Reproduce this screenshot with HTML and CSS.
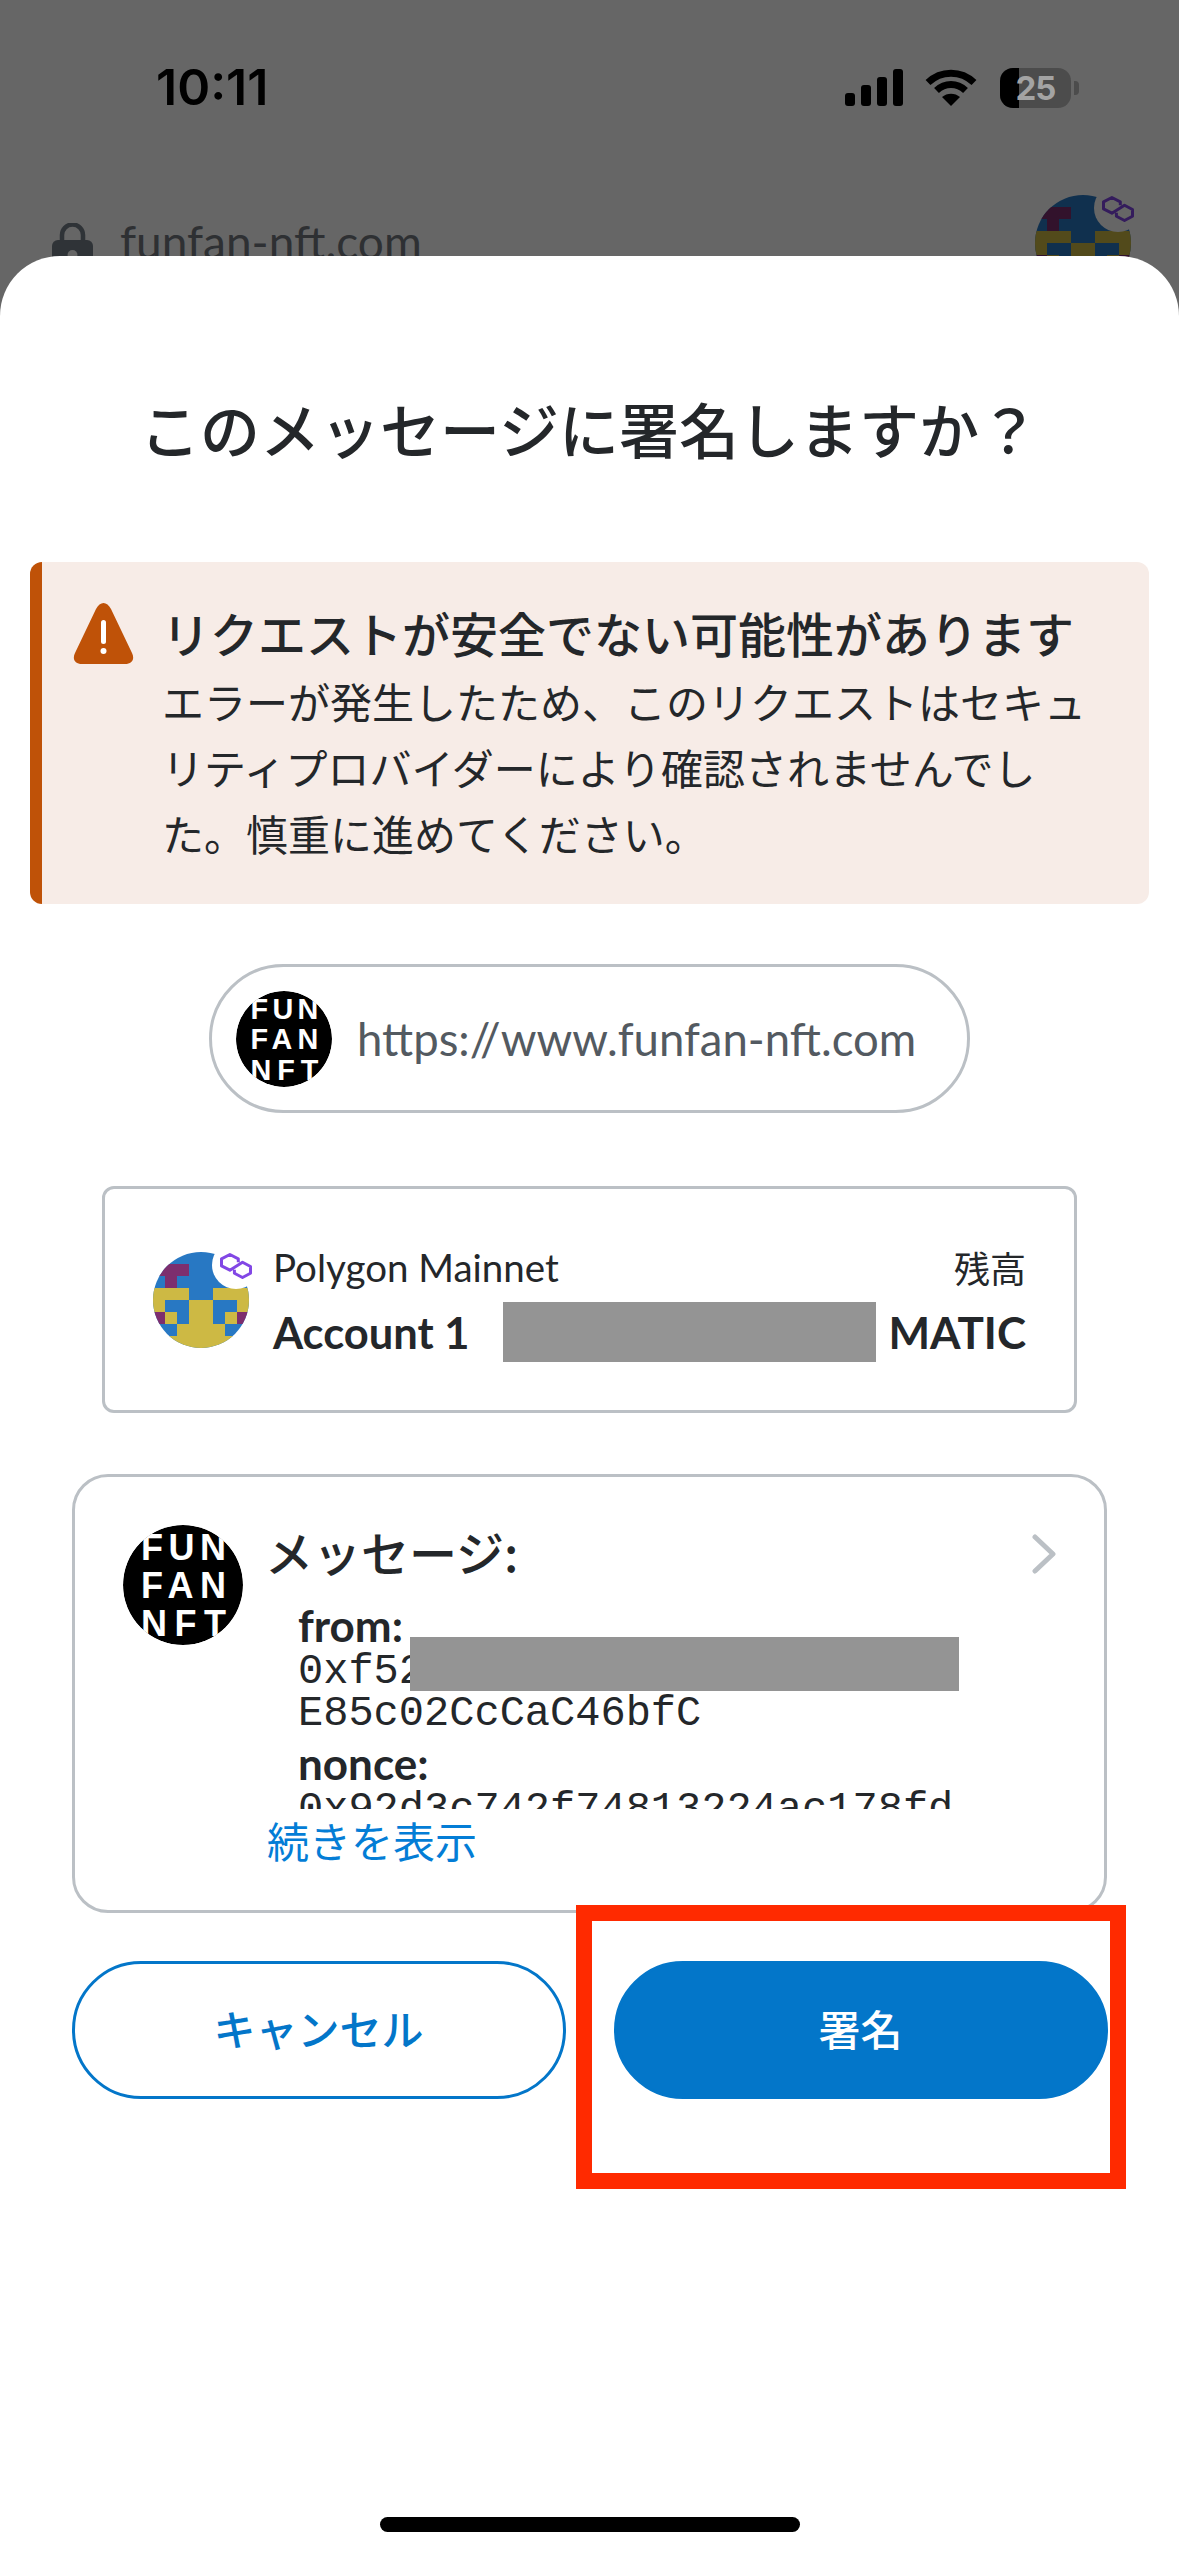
FILE: index.html
```html
<!DOCTYPE html>
<html lang="ja">
<head>
<meta charset="utf-8">
<title>署名</title>
<link rel="stylesheet" href="styles.css">
</head>
<body>
<svg class="defs" width="0" height="0" aria-hidden="true">
  <defs>
    <symbol id="ff-logo" viewBox="0 0 120 120">
      <circle cx="60" cy="60" r="60" fill="#000"/>
      <g class="logo-text">
        <text x="18" y="35" textLength="85" lengthAdjust="spacing">FUN</text>
        <text x="18" y="73" textLength="85" lengthAdjust="spacing">FAN</text>
        <text x="18" y="111" textLength="85" lengthAdjust="spacing">NFT</text>
      </g>
    </symbol>
    <symbol id="blockie" viewBox="0 0 96 96" overflow="visible">
      <clipPath id="round"><circle cx="48" cy="48" r="48"/></clipPath>
      <g clip-path="url(#round)">
        <rect width="96" height="96" fill="#2878c3"/>
        <g fill="#7d2e6e">
          <rect x="0" y="12" width="36" height="12"/>
          <rect x="12" y="24" width="12" height="12"/>
          <rect x="0" y="60" width="12" height="12"/>
          <rect x="84" y="60" width="12" height="12"/>
        </g>
        <g fill="#cdb944">
          <rect x="0" y="36" width="36" height="12"/>
          <rect x="60" y="36" width="36" height="12"/>
          <rect x="0" y="48" width="12" height="12"/>
          <rect x="84" y="48" width="12" height="12"/>
          <rect x="36" y="48" width="24" height="36"/>
          <rect x="12" y="60" width="12" height="12"/>
          <rect x="72" y="60" width="12" height="12"/>
          <rect x="24" y="72" width="48" height="12"/>
          <rect x="0" y="84" width="96" height="12"/>
        </g>
      </g>
      <circle cx="83" cy="13" r="24" fill="#fff"/>
      <path d="M85.300 10.200V6.800L76.900 2.500 68.500 6.800V13.900L76.900 18.200 89.500 10.200 97.500 14.500V21.200L89.500 25.500 81.400 21.200V17.700" fill="none" stroke="#8247e5" stroke-width="3" stroke-linejoin="round"/>
    </symbol>
  </defs>
</svg>

<div class="screen">
  <header class="backdrop">
    <div class="status">
      <span class="time">10:11</span>
      <div class="status-icons">
        <svg class="signal" viewBox="0 0 58 37"><g fill="#000"><rect x="0" y="24" width="10" height="13" rx="3"/><rect x="16" y="16" width="10" height="21" rx="3"/><rect x="32" y="8" width="10" height="29" rx="3"/><rect x="48" y="0" width="10" height="37" rx="3"/></g></svg>
        <svg class="wifi" viewBox="0 0 52 37"><g fill="none" stroke="#000" stroke-width="7"><path d="M3 13.5C16 1 36 1 49 13.5"/><path d="M11.5 21.5C20 13.500 32 13.500 40.500 21.500"/></g><path d="M26 37 17 28c5-4.500 13-4.500 18 0z" fill="#000"/></svg>
        <div class="battery">
          <span class="battery-fill"></span>
          <span class="battery-num">25</span>
          <span class="battery-tip"></span>
        </div>
      </div>
    </div>
    <div class="site">
      <svg class="lock" viewBox="0 0 41 48"><path d="M10 20v-8a10.500 10.500 0 0 1 21 0v8" fill="none" stroke="#2f3337" stroke-width="4.500"/><rect x="0" y="17" width="41" height="31" rx="6" fill="#2f3337"/><circle cx="20.500" cy="32" r="5" fill="#666"/></svg>
      <span class="site-name">funfan-nft.com</span>
      <svg class="site-avatar"><use href="#blockie"/></svg>
    </div>
  </header>

  <main class="sheet">
    <h1 class="title">このメッセージに署名しますか？</h1>

    <section class="alert">
      <svg class="alert-icon" viewBox="0 0 61 61"><path d="M30.500 0c2.700 0 5.500 2 7.500 6l21 44c3 6 0 11-7 11H9c-7 0-10-5-7-11L23 6c2-4 4.800-6 7.500-6z" fill="#bf5208"/><rect x="28" y="17" width="5" height="24" rx="2.500" fill="#fff"/><circle cx="30.500" cy="48" r="3" fill="#fff"/></svg>
      <div class="alert-body">
        <h2 class="alert-title">リクエストが安全でない可能性があります</h2>
        <p class="alert-text">エラーが発生したため、このリクエストはセキュリティプロバイダーにより確認されませんでした。慎重に進めてください。</p>
      </div>
    </section>

    <div class="origin">
      <svg class="origin-logo"><use href="#ff-logo"/></svg>
      <span class="origin-url">https://www.funfan-nft.com</span>
    </div>

    <section class="account">
      <svg class="account-avatar"><use href="#blockie"/></svg>
      <div class="account-main">
        <div class="account-row">
          <span class="network">Polygon Mainnet</span>
          <span class="balance-label">残高</span>
        </div>
        <div class="account-row account-row-second">
          <span class="account-name">Account 1</span>
          <span class="balance"><span class="redact-inline"></span><span class="unit">MATIC</span></span>
        </div>
      </div>
    </section>

    <section class="message">
      <svg class="message-logo"><use href="#ff-logo"/></svg>
      <div class="message-main">
        <div class="message-head">
          <h3 class="message-title">メッセージ:</h3>
          <svg class="chevron" viewBox="0 0 24 40"><path d="M3 3 21 20 3 37" fill="none" stroke="#bbc0c5" stroke-width="5" stroke-linecap="round" stroke-linejoin="round"/></svg>
        </div>
        <div class="message-data">
          <div class="field">
            <div class="key">from:</div>
            <div class="value">0xf52<br>E85c02CcCaC46bfC</div>
            <span class="redact-over"></span>
          </div>
          <div class="field">
            <div class="key">nonce:</div>
            <div class="value">0x92d3c742f74813224ac178fd</div>
          </div>
        </div>
        <a class="more">続きを表示</a>
      </div>
    </section>

    <div class="actions">
      <button class="btn btn-outline">キャンセル</button>
      <button class="btn btn-solid">署名</button>
    </div>

    <div class="home-bar"></div>
  </main>

  <div class="highlight"></div>
</div>
</body>
</html>
```

FILE: styles.css
```css
* { box-sizing: border-box; }
html, body { margin: 0; padding: 0; background: #fff; }
body {
  width: 1179px;
  height: 2556px;
  overflow: hidden;
  font-family: Lato, "Noto Sans CJK JP", sans-serif;
  color: #24272a;
}
.defs { position: absolute; }
.logo-text text {
  font-family: "Liberation Sans", sans-serif;
  font-weight: 700;
  font-size: 36px;
  fill: #fff;
}
.screen {
  position: relative;
  width: 1179px;
  height: 2556px;
  display: flex;
  flex-direction: column;
  overflow: hidden;
}

/* dimmed page behind the sheet */
.backdrop {
  height: 316px;
  margin-bottom: -60px;
  background: #666;
  overflow: hidden;
  flex: none;
}
.status {
  display: flex;
  justify-content: space-between;
  align-items: center;
  height: 37px;
  margin: 69px 108px 0 156px;
}
.time {
  font-family: Inter, sans-serif;
  font-weight: 600;
  font-size: 50px;
  color: #000;
  line-height: 37px;
}
.status-icons { display: flex; align-items: center; }
.signal { width: 58px; height: 37px; }
.wifi { width: 52px; height: 37px; margin-left: 22px; }
.battery {
  position: relative;
  width: 71px;
  height: 40px;
  margin-left: 23px;
  border-radius: 13px;
  background: #4c4c4c;
  display: flex;
  align-items: center;
  justify-content: center;
}
.battery-fill {
  position: absolute;
  left: 0; top: 0; bottom: 0;
  width: 19px;
  background: #000;
  border-radius: 13px 0 0 13px;
}
.battery-num {
  position: relative;
  font-family: Inter, sans-serif;
  font-weight: 700;
  font-size: 33px;
  letter-spacing: -1px;
  color: #a3a3a3;
  line-height: 40px;
}
.battery-tip {
  position: absolute;
  right: -8px;
  top: 13px;
  width: 5px;
  height: 14px;
  background: #4c4c4c;
  border-radius: 0 4px 4px 0;
}
.site {
  display: flex;
  align-items: flex-start;
  margin: 0 48px 0 52px;
  height: 160px;
  padding-top: 89px;
  position: relative;
}
.lock { width: 41px; height: 48px; flex: none; margin-top: 28px; }
.site-name {
  margin-left: 27px;
  font-size: 46px;
  line-height: 50px;
  margin-top: 22px;
  color: #2e3033;
}
.site-avatar {
  position: absolute;
  right: 0;
  top: 89px;
  width: 96px;
  height: 96px;
  overflow: visible;
  filter: brightness(.4);
}

/* sheet */
.sheet {
  flex: 1;
  position: relative;
  background: #fff;
  border-radius: 60px 60px 0 0;
  display: flex;
  flex-direction: column;
  align-items: center;
}
.title {
  margin: 129px 0 0;
  font-family: "Noto Sans CJK JP", sans-serif;
  font-weight: 500;
  font-size: 60px;
  line-height: 86px;
}
.alert {
  width: 1119px;
  height: 342px;
  margin-top: 91px;
  background: #f7ece7;
  border-left: 12px solid #bf5208;
  border-radius: 12px;
  display: flex;
  padding: 37px 0 0 31px;
}
.alert-icon { width: 61px; height: 61px; flex: none; margin-top: 4px; }
.alert-body { margin-left: 28px; width: 932px; }
.alert-title {
  margin: 0;
  font-family: "Noto Sans CJK JP", sans-serif;
  font-weight: 500;
  font-size: 48px;
  line-height: 66px;
}
.alert-text {
  margin: 3px 0 0;
  font-family: "Noto Sans CJK JP", sans-serif;
  font-size: 42px;
  line-height: 66px;
}
.origin {
  width: 761px;
  height: 149px;
  margin-top: 60px;
  border: 3px solid #bbc0c5;
  border-radius: 75px;
  display: flex;
  align-items: center;
  padding-left: 24px;
}
.origin-logo { width: 96px; height: 96px; border-radius: 50%; flex: none; }
.origin-url {
  margin-left: 25px;
  font-size: 45.5px;
  color: #535a61;
}
.account {
  width: 975px;
  height: 227px;
  margin-top: 73px;
  border: 3px solid #bbc0c5;
  border-radius: 12px;
  display: flex;
  align-items: center;
  padding: 0 48px 0 48px;
}
.account-avatar { width: 96px; height: 96px; flex: none; overflow: visible; }
.account-main { flex: 1; margin: 7px 0 0 24px; }
.account-row { display: flex; justify-content: space-between; align-items: center; }
.account-row-second { margin-top: 13px; }
.network { font-size: 38.5px; line-height: 44px; }
.balance-label { font-family: "Noto Sans CJK JP", sans-serif; font-size: 36px; line-height: 44px; }
.account-name { font-weight: 700; font-size: 43.5px; line-height: 60px; }
.balance { display: flex; align-items: center; }
.redact-inline { width: 373px; height: 60px; background: #949494; }
.unit { margin-left: 12px; font-weight: 700; font-size: 44px; line-height: 60px; }
.message {
  width: 1035px;
  height: 439px;
  margin-top: 61px;
  border: 3px solid #bbc0c5;
  border-radius: 36px;
  display: flex;
  align-items: flex-start;
  padding: 48px 0 0 48px;
}
.message-logo { width: 120px; height: 120px; border-radius: 50%; flex: none; }
.message-main { flex: 1; margin-left: 22px; min-width: 0; }
.message-head {
  display: flex;
  justify-content: space-between;
  align-items: center;
  padding-right: 48px;
  height: 58px;
  margin-top: -3px;
}
.message-title {
  margin: 0;
  font-family: "Noto Sans CJK JP", sans-serif;
  font-weight: 500;
  font-size: 48px;
  line-height: 58px;
}
.chevron { width: 24px; height: 40px; margin-top: 5px; }
.message-data {
  height: 210px;
  margin-left: 33px;
  margin-top: 19px;
  overflow: hidden;
}
.field { position: relative; margin-bottom: 2px; }
.key { font-weight: 700; font-size: 44px; line-height: 52px; }
.value {
  font-family: "Liberation Mono", monospace;
  font-size: 42px;
  line-height: 42px;
  white-space: nowrap;
}
.redact-over {
  position: absolute;
  left: 112px;
  top: 38px;
  width: 549px;
  height: 54px;
  background: #949494;
}
.more {
  display: block;
  margin-top: 3px;
  margin-left: 2px;
  font-family: "Noto Sans CJK JP", sans-serif;
  font-size: 42px;
  line-height: 56px;
  color: #037dd6;
}
.actions {
  display: flex;
  gap: 48px;
  width: 1036px;
  margin-top: 48px;
}
.btn {
  flex: 1;
  height: 138px;
  border-radius: 69px;
  font-family: "Noto Sans CJK JP", sans-serif;
  font-weight: 500;
  font-size: 42px;
  padding: 0 0 5px;
}
.btn-outline { background: #fff; border: 3px solid #0376c9; color: #0376c9; }
.btn-solid { background: #0376c9; border: 3px solid #0376c9; color: #fff; }
.home-bar {
  margin-top: auto;
  margin-bottom: 24px;
  width: 420px;
  height: 15px;
  border-radius: 8px;
  background: #000;
}

/* annotation drawn over the screenshot */
.highlight {
  position: absolute;
  left: 576px;
  top: 1905px;
  width: 550px;
  height: 284px;
  border: 16px solid #ff2a00;
}
```
